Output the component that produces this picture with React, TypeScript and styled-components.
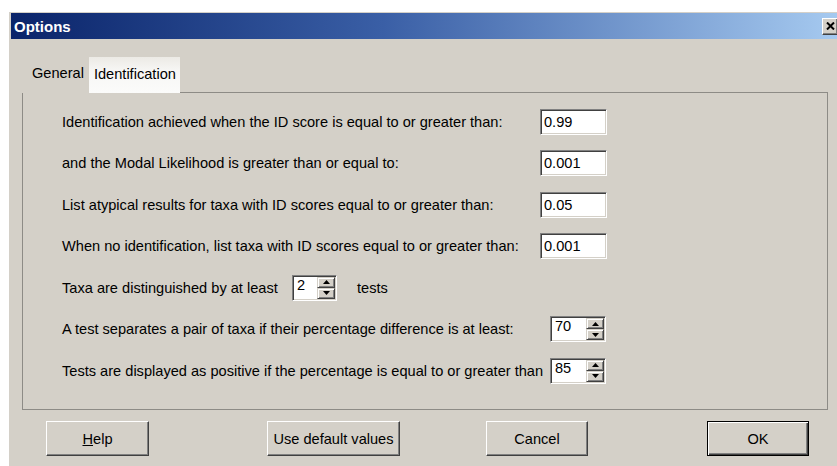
import React from 'react';
import styled, {createGlobalStyle, css} from 'styled-components';

const GlobalStyle = createGlobalStyle`
    html, body {
        margin: 0;
        padding: 0;
        background: #fff;
        overflow: hidden;
    }
    body {
        font-family: "Liberation Sans", Arial, sans-serif;
        font-size: 15px;
        color: #000;
    }
`

type FieldRow = {
    label: string,
    value: string,
    labelWidth: number
}

const fieldRows: FieldRow[] = [
    {label: 'Identification achieved when the ID score is equal to or greater than:', value: '0.99', labelWidth: 478},
    {label: 'and the Modal Likelihood is greater than or equal to:', value: '0.001', labelWidth: 478},
    {label: 'List atypical results for taxa with ID scores equal to or greater than:', value: '0.05', labelWidth: 478},
    {label: 'When no identification, list taxa with ID scores equal to or greater than:', value: '0.001', labelWidth: 478},
]

const spinRows: FieldRow[] = [
    {label: 'A test separates a pair of taxa if their percentage difference is at least:', value: '70', labelWidth: 488},
    {label: 'Tests are displayed as positive if the percentage is equal to or greater than', value: '85', labelWidth: 488},
]

const Arrow = ({down}: {down?: boolean}) => (
    <svg width="7" height="4" viewBox="0 0 7 4">
        <polygon points={down ? '0,0 7,0 3.5,4' : '0,4 7,4 3.5,0'} fill="#000"/>
    </svg>
)

const Spinner = ({value, width}: {value: string, width: number}) => (
    <SpinBox $width={width}>
        <FieldText>{value}</FieldText>
        <SpinButtons>
            <SpinHalf><Arrow/></SpinHalf>
            <SpinHalf><Arrow down/></SpinHalf>
        </SpinButtons>
    </SpinBox>
)

const App = () => {
    return (
        <Page>
            <GlobalStyle/>
            <Dialog>
                <TitleBar>
                    <Title>Options</Title>
                    <CloseButton>
                        <svg width="9" height="8" viewBox="0 0 9 8">
                            <path d="M1 0.5 L8 7.5 M8 0.5 L1 7.5" stroke="#000" strokeWidth="2"/>
                        </svg>
                    </CloseButton>
                </TitleBar>

                <TabStrip>
                    <Tab>General</Tab>
                    <Tab $active>Identification</Tab>
                </TabStrip>

                <Panel>
                    {fieldRows.map(row => (
                        <Row key={row.label}>
                            <Label $width={row.labelWidth}>{row.label}</Label>
                            <TextField $width={67}>
                                <FieldText>{row.value}</FieldText>
                            </TextField>
                        </Row>
                    ))}
                    <Row>
                        <Label $width={230}>Taxa are distinguished by at least</Label>
                        <Spinner value="2" width={45}/>
                        <Suffix>tests</Suffix>
                    </Row>
                    {spinRows.map(row => (
                        <Row key={row.label}>
                            <Label $width={row.labelWidth}>{row.label}</Label>
                            <Spinner value={row.value} width={56}/>
                        </Row>
                    ))}
                </Panel>

                <ButtonRow>
                    <Button $width={103} $offset={35}><u>H</u>elp</Button>
                    <Button $width={133} $offset={118}>Use default values</Button>
                    <Button $width={102} $offset={86}>Cancel</Button>
                    <Button $width={102} $offset={119} $primary>OK</Button>
                </ButtonRow>
            </Dialog>
        </Page>
    );
};

export default App;

// the dialog is wider than the viewport, its right edge gets clipped
const Page = styled.div`
    padding: 12px 0 0 9px;
    width: 837px;
    height: 466px;
    box-sizing: border-box;
    overflow: hidden;
`

const Dialog = styled.div`
    width: 832px;
    height: 470px;
    flex: none;
    box-sizing: border-box;
    background: #d4d0c8;
    padding: 1px 2px 0;
`

const TitleBar = styled.div`
    height: 26px;
    display: flex;
    align-items: center;
    justify-content: space-between;
    padding: 0 1px 0 3px;
    background: linear-gradient(to right, #0a246a 0%, #3a5fa6 45%, #a6caf0 100%);
`

const Title = styled.span`
    color: #fff;
    font-weight: bold;
    font-size: 15px;
`

const CloseButton = styled.div`
    width: 16px;
    height: 17px;
    box-sizing: border-box;
    display: flex;
    align-items: center;
    justify-content: center;
    background: #d4d0c8;
    border: 1px solid;
    border-color: #fff #404040 #404040 #fff;
    box-shadow: inset -1px -1px 0 #808080;
`

const TabStrip = styled.div`
    display: flex;
    align-items: flex-end;
    margin-top: 18px;
    padding-left: 11px;
    height: 36px;
    position: relative;
    z-index: 1;
    margin-bottom: -1px;
`

const Tab = styled.div<{ $active?: boolean }>`
    height: ${p => p.$active ? 36 : 33}px;
    box-sizing: border-box;
    display: flex;
    align-items: center;
    padding: ${p => p.$active ? '0 4px 3px 5px' : '0 5px 8px 10px'};
    background: ${p => p.$active
        ? 'linear-gradient(to bottom, #eceae5 0%, #f7f7f5 40%, #fbfbfa 100%)'
        : '#d4d0c8'};
    font-size: 14.6px;
`

const Panel = styled.div`
    margin: 0 11px;
    height: 318px;
    box-sizing: border-box;
    border: 1px solid #8d8b86;
    padding: 8px 0 0 39px;
`

const Row = styled.div`
    height: 41.5px;
    display: flex;
    align-items: center;
    font-size: 14.6px;
`

const Label = styled.span<{ $width: number }>`
    width: ${p => p.$width}px;
    flex: none;
    white-space: nowrap;
`

const Suffix = styled.span`
    margin-left: 20px;
`

const sunken = css`
    height: 26px;
    box-sizing: border-box;
    background: #fff;
    border: 1px solid;
    border-color: #808080 #fff #fff #808080;
    box-shadow: inset 1px 1px 0 #404040, inset -1px -1px 0 #d4d0c8;
`

const TextField = styled.div<{ $width: number }>`
    ${sunken};
    width: ${p => p.$width}px;
    display: flex;
    align-items: center;
    padding-left: 2px;
`

const FieldText = styled.span`
    flex: 1;
    padding-left: 1px;
    font-size: 14.6px;
`

const SpinBox = styled.div<{ $width: number }>`
    ${sunken};
    width: ${p => p.$width}px;
    display: flex;
    align-items: stretch;
    padding: 1px 1px 1px 3px;
`

const SpinButtons = styled.div`
    width: 18px;
    display: flex;
    flex-direction: column;
`

const SpinHalf = styled.div`
    flex: 1;
    box-sizing: border-box;
    display: flex;
    align-items: center;
    justify-content: center;
    background: #d4d0c8;
    border: 1px solid;
    border-color: #d4d0c8 #404040 #404040 #d4d0c8;
    box-shadow: inset 1px 1px 0 #fff, inset -1px -1px 0 #808080;
`

const Button = styled.div<{ $width: number, $offset: number, $primary?: boolean }>`
    width: ${p => p.$width}px;
    margin-left: ${p => p.$offset}px;
    height: 35px;
    box-sizing: border-box;
    display: flex;
    align-items: center;
    justify-content: center;
    background: #d4d0c8;
    font-size: 14.6px;
    ${p => p.$primary
        ? css`
            border: 1px solid #000;
            box-shadow: inset 1px 1px 0 #fff, inset -1px -1px 0 #404040, inset -2px -2px 0 #808080;
        `
        : css`
            border: 1px solid;
            border-color: #fff #404040 #404040 #fff;
            box-shadow: inset -1px -1px 0 #808080;
        `}

    u {
        text-decoration: underline;
    }
`

const ButtonRow = styled.div`
    display: flex;
    margin-top: 11px;
`
